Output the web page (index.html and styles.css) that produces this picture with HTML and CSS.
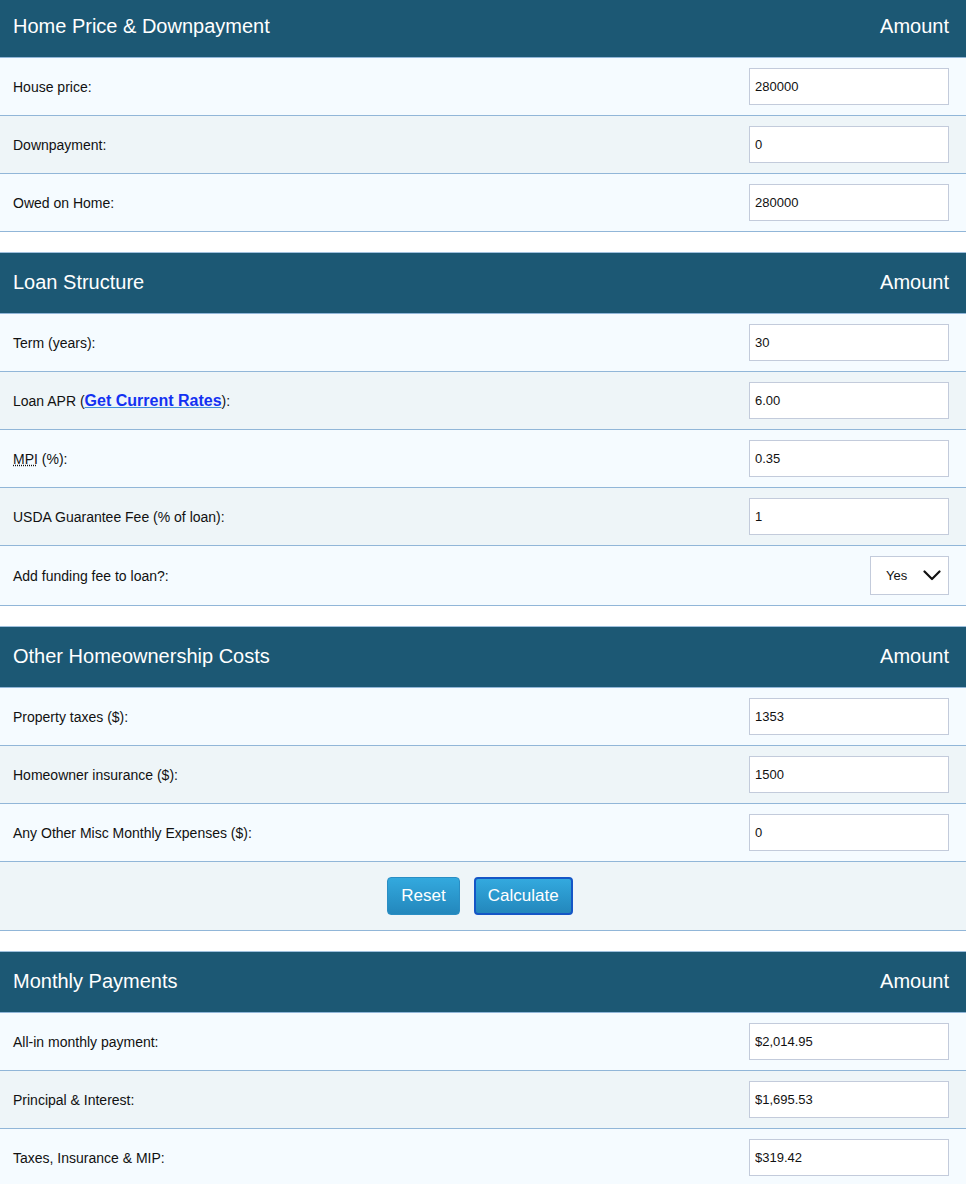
FILE: index.html
```html
<!DOCTYPE html>
<html>
<head>
<meta charset="utf-8">
<link rel="stylesheet" href="styles.css">
</head>
<body>
<div class="page">
  <section class="calc">
    <div class="head"><span>Home Price &amp; Downpayment</span><span>Amount</span></div>
    <div class="row odd"><span>House price:</span><input class="field" value="280000"></div>
    <div class="row even"><span>Downpayment:</span><input class="field" value="0"></div>
    <div class="row odd"><span>Owed on Home:</span><input class="field" value="280000"></div>
  </section>
  <section class="calc">
    <div class="head"><span>Loan Structure</span><span>Amount</span></div>
    <div class="row odd"><span>Term (years):</span><input class="field" value="30"></div>
    <div class="row even"><span>Loan APR (<a class="rates" href="#">Get Current Rates</a>):</span><input class="field" value="6.00"></div>
    <div class="row odd"><span><abbr class="abbr" title="Mortgage insurance premium">MPI</abbr> (%):</span><input class="field" value="0.35"></div>
    <div class="row even"><span>USDA Guarantee Fee (% of loan):</span><input class="field" value="1"></div>
    <div class="row odd tall"><span>Add funding fee to loan?:</span>
      <div class="select"><span>Yes</span>
        <svg class="chev" width="18" height="11" viewBox="0 0 18 11"><path d="M1.5 1.5 L9 9 L16.5 1.5" fill="none" stroke="#111" stroke-width="2.2" stroke-linecap="round" stroke-linejoin="round"/></svg>
      </div>
    </div>
  </section>
  <section class="calc">
    <div class="head"><span>Other Homeownership Costs</span><span>Amount</span></div>
    <div class="row odd"><span>Property taxes ($):</span><input class="field" value="1353"></div>
    <div class="row even"><span>Homeowner insurance ($):</span><input class="field" value="1500"></div>
    <div class="row odd"><span>Any Other Misc Monthly Expenses ($):</span><input class="field" value="0"></div>
    <div class="row even buttons"><button class="btn">Reset</button><button class="btn focus">Calculate</button></div>
  </section>
  <section class="calc">
    <div class="head"><span>Monthly Payments</span><span>Amount</span></div>
    <div class="row odd"><span>All-in monthly payment:</span><input class="field" value="$2,014.95"></div>
    <div class="row even"><span>Principal &amp; Interest:</span><input class="field" value="$1,695.53"></div>
    <div class="row odd"><span>Taxes, Insurance &amp; MIP:</span><input class="field" value="$319.42"></div>
  </section>
</div>
</body>
</html>
```
FILE: styles.css
```css
html, body {
  margin: 0;
  padding: 0;
  background: #ffffff;
}
body {
  font-family: "Liberation Sans", Arial, Helvetica, sans-serif;
  color: #111;
  overflow: hidden;
}
.page {
  margin-top: -4px;
}
.calc {
  border-top: 1px solid #9fc0dd;
  margin-bottom: 20px;
}
.head {
  display: flex;
  justify-content: space-between;
  align-items: center;
  box-sizing: border-box;
  height: 60px;
  padding: 0 17px 2px 13px;
  background: #1c5874;
  border-bottom: 1px solid #91b6d8;
  color: #fff;
  font-size: 20px;
}
.head { height: 61px; }
.row {
  display: flex;
  justify-content: space-between;
  align-items: center;
  height: 57px;
  padding: 0 17px 0 13px;
  border-bottom: 1px solid #91b6d8;
  font-size: 14px;
}
.row.odd { background: #f5fbff; }
.row.even { background: #eef5f8; }
.row.tall { height: 59px; }
.field {
  box-sizing: border-box;
  width: 200px;
  height: 37px;
  margin: 0;
  padding: 0 5px;
  border: 1px solid #c3cbdb;
  background: #fff;
  font-family: "Liberation Sans", Arial, sans-serif;
  font-size: 13px;
  color: #111;
}
.rates {
  color: #1331f2;
  font-weight: bold;
  font-size: 16px;
  text-decoration: underline;
  text-decoration-color: #3f8fd8;
}
.abbr {
  text-decoration: underline dotted;
}
.select {
  box-sizing: border-box;
  width: 79px;
  height: 39px;
  display: flex;
  align-items: center;
  justify-content: space-between;
  padding: 0 7px 0 15px;
  border: 1px solid #c3cbdb;
  background: #fff;
  font-size: 13px;
}
.chev { display: block; }
.buttons {
  height: 68px;
  justify-content: center;
  gap: 14px;
  padding: 0 6px 0 0;
}
.btn {
  box-sizing: border-box;
  height: 38px;
  padding: 0 13px;
  border: 1px solid #2a8ec4;
  border-radius: 4px;
  background: linear-gradient(#33a9de, #2387bc);
  color: #fff;
  font-family: "Liberation Sans", Arial, sans-serif;
  font-size: 17px;
}
.btn.focus {
  border: 2px solid #1556c6;
  padding: 0 12px;
}
```
